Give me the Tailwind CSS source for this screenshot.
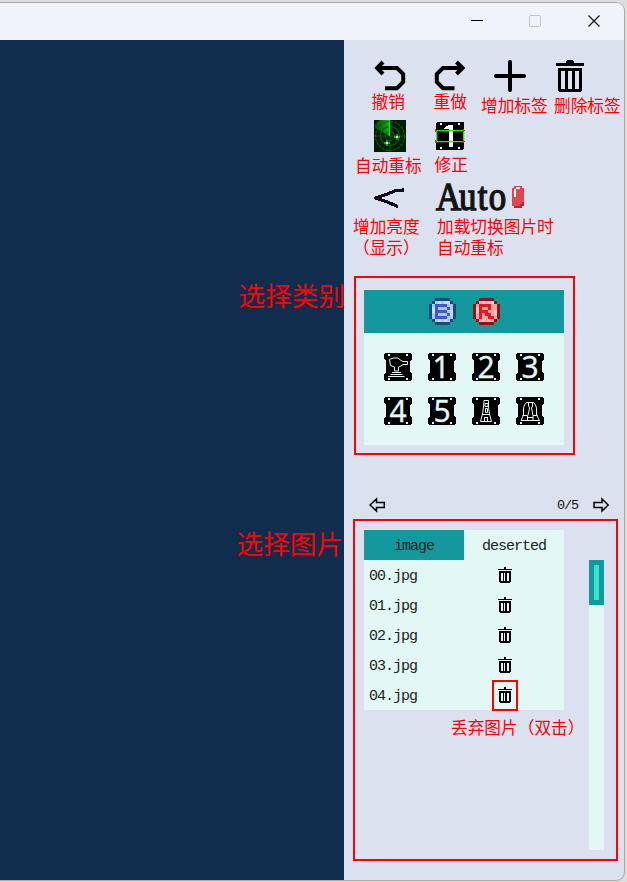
<!DOCTYPE html>
<html lang="zh-CN">
<head>
<meta charset="utf-8">
<title>Labeler</title>
<script src="https://cdn.jsdelivr.net/npm/@tailwindcss/browser@4"></script>
</head>
<body class="w-[627px] h-[882px] overflow-hidden bg-[#dddddd] pt-[2px] font-['Noto_Sans_CJK_SC',sans-serif]">
<svg class="hidden">
  <defs>
    <g id="tile" shape-rendering="crispEdges"><path d="M1 0H27V1H28V6L26 8V19L28 21V27H27V28H1V27H0V21L2 19V8L0 6V1H1Z" fill="#000"/><path d="M4 1h2v2h-2zM22 1h2v2h-2zM4 25h2v2h-2zM22 25h2v2h-2z" fill="#e3f8f5"/></g>
    <g id="disc"><path d="M2 0H7V1H8V2H9V7H8V8H7V9H2V8H1V7H0V2H1V1H2Z"/></g>
    <g id="bin" fill="#000" shape-rendering="crispEdges"><path d="M6 0h2v2h6v1H0V2h6zM1 4h12v11h-1v1H2v-1H1z"/><path d="M3 6h2v8H3zM6 6h1v8H6zM9 6h2v8H9z" fill="#e3f8f5"/></g>
  </defs>
</svg>
<div class="relative w-[625px] h-[879px] flex flex-col overflow-hidden rounded-r-[9px] border-y border-r border-[#aaaaaa] bg-[#dbe1ef]">
  <header class="h-[37px] shrink-0 flex items-center justify-end bg-[#f0f3fa] pr-[24px] pb-[2px]">
    <svg class="w-3 h-3 mr-[46px]" viewBox="0 0 12 12" shape-rendering="crispEdges"><path d="M0 5h12v1H0z"/></svg>
    <svg class="w-3 h-3 mr-[47px]" viewBox="0 0 12 12" fill="none" stroke="#c0c2c7"><rect x=".5" y=".5" width="11" height="11" rx="1"/></svg>
    <svg class="w-3 h-3" viewBox="0 0 12 12" stroke="#111" stroke-width="1.2"><path d="M.5 .5l11 11M11.500 .5l-11 11"/></svg>
  </header>
  <div class="flex flex-1">
    <main class="w-[344px] bg-[#112d4d]"></main>
    <aside class="flex-1 pt-5 pl-5">
      <div class="grid grid-cols-[repeat(4,60px)] auto-rows-[60px] pl-[10px] h-[180px]">
        <svg class="w-8 h-8" viewBox="0 0 32 32" fill="none" stroke="#000" stroke-width="4"><path d="M9 2L3.200 8L9 14M3 8H23L29.200 14V22L23 28.200H11"/></svg>
        <svg class="w-8 h-8" viewBox="0 0 32 32" fill="none" stroke="#000" stroke-width="4"><path d="M22.500 2L28.500 8L22.500 14M28.500 8H9L2.800 14V22L9 28.200H20.500"/></svg>
        <svg class="w-8 h-8" viewBox="0 0 32 32" stroke="#000" stroke-width="4" stroke-linecap="round"><path d="M16 2V30M2 16H30"/></svg>
        <svg class="w-8 h-8" viewBox="0 0 32 32" shape-rendering="crispEdges"><path d="M2 3H12V1H13V0H19V1H20V3H30V6H2ZM4 8H28V31H27V32H5V31H4Z"/><path d="M7 11h4v18H7zM14 11h4v18h-4zM21 11h4v18h-4z" fill="#dbe1ef"/></svg>
        <svg class="w-8 h-8" viewBox="0 0 32 32">
          <defs><linearGradient id="sweep"><stop offset="0" stop-color="#074a09"/><stop offset="1" stop-color="#0bb41b"/></linearGradient></defs>
          <path d="M0 0h32v32H0z" fill="#021c03"/><path d="M16 16L1 8V4L6 0H16Z" fill="url(#sweep)"/>
          <g fill="none" stroke="#0c5a10" stroke-width="1.200"><circle cx="16" cy="16" r="14.500" stroke-dasharray="3 1"/><circle cx="16" cy="16" r="9.500"/><circle cx="16" cy="16" r="4.500"/><path d="M0 16H32M16 16V32"/></g>
          <path d="M15.500 0V16" stroke="#14db27" stroke-width="1.500"/>
          <path d="M13 20V26M10 23H16M23 14V20M20 17H26" stroke="#42b94b" stroke-width="1.300"/><path d="M12 22h2v2h-2zM22 16h2v2h-2z" fill="#b8ffbb"/>
        </svg>
        <svg class="w-8 h-8" viewBox="-2 -2 32 32" shape-rendering="crispEdges">
          <rect width="28" height="28" rx="2"/><path d="M4 1h2v2h-2zM22 1h2v2h-2zM4 25h2v2h-2zM22 25h2v2h-2z" fill="#fff"/>
          <path d="M8 6L13 3H17V25H13V7H8Z" fill="#fff"/>
          <path d="M0 8H28V9H0ZM0 19H28V20H0ZM0 8H1V20H0ZM27 8H28V20H27Z" fill="#00ff00" stroke="#00ff00" stroke-width=".3"/>
          <path d="M-1 7h1v1h1v1h-1v1h-1zM27 7h1v1h1v1h-1v1h-1zM-1 18h1v1h1v1h-1v1h-1zM27 18h1v1h1v1h-1v1h-1z" fill="#f22"/>
        </svg>
        <span></span><span></span>
        <svg class="w-8 h-8" viewBox="0 0 32 32" fill="none" stroke="#130a1c" stroke-width="3.200" shape-rendering="crispEdges"><path d="M30 10L22 10.500L12 14.500L2 18L12 21.500L24 26.500"/></svg>
        <svg class="w-[92px] h-8 overflow-visible" viewBox="0 0 92 32">
          <text transform="scale(.85 1)" x="2.500 29.500 51.500 64.500" y="30" font-family="Liberation Serif, serif" font-size="41" fill="#111" stroke="#161616" stroke-width="1.500">Auto</text>
          <g shape-rendering="crispEdges"><path d="M80 6H88V8H90V26H88V28H80V26H78V8H80Z" fill="#e0474b"/><path d="M88 22h2v4h-2v2h-8v-2h6v-2h2z" fill="#a52b35"/><path d="M80 9h2V7h4v2h-4v8h-2z" fill="#fff"/></g>
        </svg>
      </div>
      <section class="mt-[50px] w-[200px] h-[155px] bg-[#e3f8f5]">
        <div class="h-[43px] flex justify-center gap-[17px] pt-2 bg-[#14989e]">
          <svg class="w-[27px] h-[27px]" viewBox="0 0 9 9" shape-rendering="crispEdges"><use href="#disc" fill="#194a7b"/><path d="M2 1H7V2H8V7H7V8H2V7H1V2H2Z" fill="#a9cafa"/><path d="M3 1h1v1H3zM5 1h2v1H5zM1 3h1v2H1zM7 4h1v2H7zM3 7h1v1H3zM5 7h1v1H5z" fill="#cbdefd"/><path d="M2 2H6V3H7V4H6V5H7V6H6V7H2ZM3 3V4H6V3ZM3 5V6H6V5Z" fill="#3d57cf" fill-rule="evenodd"/></svg>
          <svg class="w-[27px] h-[27px]" viewBox="0 0 9 9" shape-rendering="crispEdges"><use href="#disc" fill="#8c1519"/><path d="M2 1H7V2H8V7H7V8H2V7H1V2H2Z" fill="#fba3a5"/><path d="M3 1h1v1H3zM5 1h2v1H5zM1 3h1v2H1zM7 4h1v2H7zM3 7h1v1H3zM5 7h1v1H5z" fill="#fdc3c4"/><path d="M2 2H6V4H5V5H6V6H7V7H5V6H4V5H3V7H2ZM3 3V4H5V3Z" fill="#e21b20" fill-rule="evenodd"/></svg>
        </div>
        <div class="grid grid-cols-4 gap-4 px-5 pt-5 w-[200px] font-['Noto_Sans']">
          <svg class="w-7 h-7 overflow-visible" viewBox="0 0 28 28"><use href="#tile"/><path d="M5.500 6.500L9 5H14L17 7.500L19 8.500H23.500V11.500H19L17 13L14.500 14V18H10.500V14L6.500 12.500ZM8 19.500H17M6.500 21.500H18.500M4 23.500H20.500" fill="none" stroke="#e3f8f5"/></svg>
          <svg class="w-7 h-7 overflow-visible" viewBox="0 0 28 28"><use href="#tile"/><text x="13" y="25" text-anchor="middle" font-size="30" fill="#e3f8f5" stroke="#e3f8f5" stroke-width=".3">1</text></svg>
          <svg class="w-7 h-7 overflow-visible" viewBox="0 0 28 28"><use href="#tile"/><text x="14" y="25" text-anchor="middle" font-size="30" fill="#e3f8f5" stroke="#e3f8f5" stroke-width=".3">2</text></svg>
          <svg class="w-7 h-7 overflow-visible" viewBox="0 0 28 28"><use href="#tile"/><text x="14" y="25" text-anchor="middle" font-size="30" fill="#e3f8f5" stroke="#e3f8f5" stroke-width=".3">3</text></svg>
          <svg class="w-7 h-7 overflow-visible" viewBox="0 0 28 28"><use href="#tile"/><text x="14" y="25" text-anchor="middle" font-size="30" fill="#e3f8f5" stroke="#e3f8f5" stroke-width=".3">4</text></svg>
          <svg class="w-7 h-7 overflow-visible" viewBox="0 0 28 28"><use href="#tile"/><text x="14" y="25" text-anchor="middle" font-size="30" fill="#e3f8f5" stroke="#e3f8f5" stroke-width=".3">5</text></svg>
          <svg class="w-7 h-7 overflow-visible" viewBox="0 0 28 28"><use href="#tile"/><path d="M12 3.500H16.500V10L17.500 17L19.500 24.500H8.500L10.500 17L11.500 10ZM13 6.500h3v3h-3zM13.500 11.500h2v4h-2zM10.500 17.500H17.500M12.500 20.500V24M15.500 20.500V24M12 20.500H16" fill="none" stroke="#e3f8f5"/></svg>
          <svg class="w-7 h-7 overflow-visible" viewBox="0 0 28 28"><use href="#tile"/><path d="M10.500 5.500H17.500L19.500 8L20.500 11V18L23.500 23.500H5L7.500 18V11L8.500 8ZM12.500 6V9L13.500 11L12 18.500M16.500 6V9L15.500 11L17 18.500M6.500 18.500H11.500V23M17 23V18.500H21.500M11.500 20.500H17" fill="none" stroke="#e3f8f5"/></svg>
        </div>
      </section>
      <div class="mt-[50px] h-[20px] flex items-center pl-[5px] pr-[15px]">
        <svg class="w-4 h-4" viewBox="0 0 16 16" fill="none" stroke="#000" stroke-width="1.500"><path d="M1 8L7.500 2V5.500H15.300V10.500H7.500V14Z"/></svg>
        <span class="ml-auto mr-[15px] pt-[2px] font-['Liberation_Mono',monospace] text-[13.5px] tracking-[-1.100px] leading-5 text-[#111]">0/5</span>
        <svg class="w-4 h-4" viewBox="0 0 16 16" fill="none" stroke="#000" stroke-width="1.500"><path d="M15.200 8L9 2V5.500H1V10.500H9V14Z"/></svg>
      </div>
      <div class="mt-[15px] flex items-start gap-[25px]">
        <div class="w-[200px] bg-[#e3f8f5] font-['Liberation_Mono',monospace] text-[15px] leading-[26px] tracking-[-1px] text-[#222]">
          <div class="grid grid-cols-2 text-center h-[30px]"><div class="bg-[#14989e] pt-[4px]">image</div><div class="pt-[4px]">deserted</div></div>
          <div class="flex items-center h-[30px] pl-[5px]"><span class="w-[129px] pt-[3px]">00.jpg</span><svg class="w-[14px] h-4" viewBox="0 0 14 16"><use href="#bin"/></svg></div>
          <div class="flex items-center h-[30px] pl-[5px]"><span class="w-[129px] pt-[3px]">01.jpg</span><svg class="w-[14px] h-4" viewBox="0 0 14 16"><use href="#bin"/></svg></div>
          <div class="flex items-center h-[30px] pl-[5px]"><span class="w-[129px] pt-[3px]">02.jpg</span><svg class="w-[14px] h-4" viewBox="0 0 14 16"><use href="#bin"/></svg></div>
          <div class="flex items-center h-[30px] pl-[5px]"><span class="w-[129px] pt-[3px]">03.jpg</span><svg class="w-[14px] h-4" viewBox="0 0 14 16"><use href="#bin"/></svg></div>
          <div class="flex items-center h-[30px] pl-[5px]"><span class="w-[129px] pt-[3px]">04.jpg</span><svg class="w-[14px] h-4" viewBox="0 0 14 16"><use href="#bin"/></svg></div>
        </div>
        <div class="mt-[30px] w-[15px] h-[290px] bg-[#e3f8f5]"><div class="h-[45px] bg-[#14989e] p-[5px]"><div class="h-[35px] bg-[#34e4cc]"></div></div></div>
      </div>
    </aside>
  </div>
</div>

<!-- annotations over the window -->
<div class="absolute inset-0 text-[#ff0000] text-[16.7px] leading-[20px] whitespace-nowrap">
  <div class="absolute left-[354px] top-[276px] w-[221px] h-[179px] border-2 border-[#ff0000]"></div>
  <div class="absolute left-[353px] top-[519px] w-[265px] h-[342px] border-2 border-[#ff0000]"></div>
  <div class="absolute left-[492px] top-[680px] w-[26px] h-[31px] border-2 border-[#ff0000]"></div>
  <div class="absolute left-[371.5px] top-[91px]">撤销</div>
  <div class="absolute left-[433.5px] top-[91px]">重做</div>
  <div class="absolute left-[481px] top-[95px]">增加标签</div>
  <div class="absolute left-[554px] top-[95px]">删除标签</div>
  <div class="absolute left-[355px] top-[155px]">自动重标</div>
  <div class="absolute left-[434.5px] top-[154px]">修正</div>
  <div class="absolute left-[353px] top-[216px] leading-[21px]">增加亮度<br>（显示）</div>
  <div class="absolute left-[437px] top-[216px] leading-[21px]">加载切换图片时<br>自动重标</div>
  <div class="absolute left-[451px] top-[717px]">丢弃图片（双击）</div>
  <div class="absolute left-[238.5px] top-[275px] text-[26.700px] leading-[40px]">选择类别</div>
  <div class="absolute left-[236.5px] top-[523px] text-[26.700px] leading-[40px]">选择图片</div>
</div>
</body>
</html>
